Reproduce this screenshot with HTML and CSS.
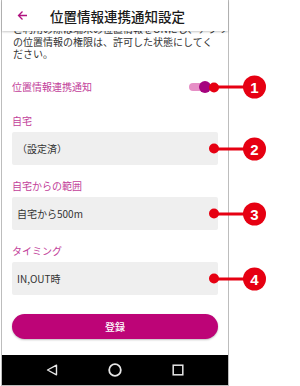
FILE: index.html
```html
<!DOCTYPE html>
<html lang="ja">
<head>
    <meta charset="UTF-8">
    <meta name="viewport" content="width=device-width, initial-scale=1.0">
    <title>位置情報連携通知設定</title>
    <link rel="stylesheet" href="styles.css">
</head>
<body>
<div class="phone">
    <header class="appbar">
        <svg class="back" width="11" height="11" viewBox="0 0 11 11">
            <path d="M10 5.5H1.5M5.5 1.5L1.5 5.5L5.5 9.5" fill="none" stroke="#b0127f" stroke-width="1.3"/>
        </svg>
        <h1>位置情報連携通知設定</h1>
    </header>

    <div class="intro">
        <p>ご利用の際は端末の位置情報をONにし、アプリ<br>の位置情報の権限は、許可した状態にしてく<br>ださい。</p>
    </div>

    <div class="form">
        <div class="switch-row">
            <span class="label">位置情報連携通知</span>
            <span class="switch"><span class="knob"></span></span>
            <span class="callout"><i class="dot"></i><i class="line"></i><b class="num">1</b></span>
        </div>

        <div class="field">
            <div class="label">自宅</div>
            <div class="box">（設定済）
                <span class="callout"><i class="dot"></i><i class="line"></i><b class="num">2</b></span>
            </div>
        </div>

        <div class="field">
            <div class="label">自宅からの範囲</div>
            <div class="box">自宅から500m
                <span class="callout"><i class="dot"></i><i class="line"></i><b class="num">3</b></span>
            </div>
        </div>

        <div class="field">
            <div class="label">タイミング</div>
            <div class="box">IN,OUT時
                <span class="callout"><i class="dot"></i><i class="line"></i><b class="num">4</b></span>
            </div>
        </div>

        <button class="submit">登録</button>
    </div>

    <nav class="navbar">
        <span class="slot">
            <svg width="12" height="12" viewBox="0 0 12 12"><path d="M10.5 1.2V10.8L1.5 6Z" fill="none" stroke="#e6e6e6" stroke-width="1.4" stroke-linejoin="round"/></svg>
        </span>
        <span class="slot">
            <svg width="14" height="14" viewBox="0 0 14 14"><circle cx="7" cy="7" r="5.8" fill="none" stroke="#e6e6e6" stroke-width="1.8"/></svg>
        </span>
        <span class="slot">
            <svg width="12" height="12" viewBox="0 0 12 12"><rect x="1.2" y="1.2" width="9.6" height="9.6" fill="none" stroke="#e6e6e6" stroke-width="1.5"/></svg>
        </span>
    </nav>
</div>
</body>
</html>
```

FILE: styles.css
```css
body {
    margin: 0;
    background-color: #fff;
    font-family: "Noto Sans CJK JP", "Noto Sans", sans-serif;
}
.phone {
    width: 226px;
    margin-left: 1px;
    border-left: 1px solid #bdbdbd;
    border-right: 1px solid #bdbdbd;
    border-bottom: 1px solid #bdbdbd;
}
.appbar {
    position: relative;
    z-index: 1;
    height: 31px;
    display: flex;
    align-items: center;
    padding-left: 15px;
    background-color: #fff;
    box-shadow: 0 1px 2px rgba(0, 0, 0, 0.22);
}
.appbar h1 {
    margin: 0 0 0 22px;
    font-size: 13.5px;
    font-weight: 500;
    color: #1a1a1a;
}
.intro {
    height: 31px;
    overflow: hidden;
    padding-left: 11px;
}
.intro p {
    margin: -8px 0 0;
    font-size: 10px;
    line-height: 12.5px;
    color: #333;
    white-space: nowrap;
}
.form {
    padding: 0 10px 16px;
}
.label {
    font-size: 10px;
    line-height: 14px;
    color: #c2409a;
}
.switch-row {
    position: relative;
    margin-top: 18px;
    height: 14px;
    display: flex;
    align-items: center;
    justify-content: space-between;
}
.switch {
    position: relative;
    width: 22px;
    height: 8px;
    margin-right: 7px;
    border-radius: 4px;
    background-color: #e68fc6;
}
.knob {
    position: absolute;
    right: 0;
    top: -2px;
    width: 12px;
    height: 12px;
    border-radius: 50%;
    background-color: #a5037e;
}
.field {
    margin-top: 14px;
}
.switch-row + .field {
    margin-top: 20px;
}
.field .label {
    margin-bottom: 4px;
}
.box {
    position: relative;
    height: 33px;
    display: flex;
    align-items: center;
    padding-left: 5px;
    border-radius: 2px;
    background-color: #efefef;
    font-size: 10px;
    color: #333;
}
.callout {
    position: absolute;
    left: calc(100% - 9px);
    top: 50%;
    transform: translateY(-50%);
    display: flex;
    align-items: center;
    z-index: 2;
}
.callout .dot {
    width: 10px;
    height: 10px;
    border-radius: 50%;
    background-color: #e60012;
}
.callout .line {
    width: 26px;
    height: 3px;
    margin: 0 -1px;
    background-color: #e60012;
}
.callout .num {
    width: 23px;
    height: 23px;
    border-radius: 50%;
    background-color: #e60012;
    color: #fff;
    font-family: "Liberation Sans", Arial, sans-serif;
    font-size: 15px;
    font-weight: bold;
    line-height: 23px;
    text-align: center;
}
.submit {
    display: block;
    width: 100%;
    height: 25px;
    margin-top: 19px;
    border: none;
    border-radius: 13px;
    background-color: #bd0477;
    color: #fff;
    font-family: "Noto Sans CJK JP", sans-serif;
    font-size: 10px;
    font-weight: 500;
    box-shadow: 0 1px 2px rgba(0, 0, 0, 0.25);
}
.navbar {
    height: 30px;
    display: flex;
    justify-content: center;
    align-items: center;
    background-color: #000;
}
.slot {
    width: 63px;
    display: flex;
    justify-content: center;
    align-items: center;
}
.slot svg {
    display: block;
}
```
